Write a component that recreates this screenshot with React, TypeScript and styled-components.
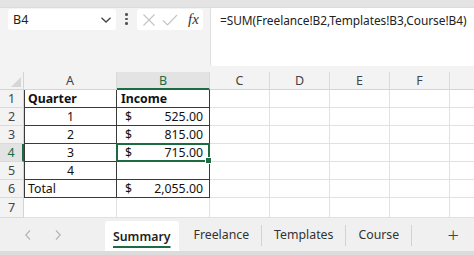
import React from 'react';
import styled, { createGlobalStyle } from 'styled-components';

const GlobalStyle = createGlobalStyle`
  html, body {
    margin: 0;
    padding: 0;
    background: #f3f3f3;
    font-family: "Noto Sans", "Open Sans", sans-serif;
    color: #1f1f1f;
  }
  #root {
    width: 474px;
    height: 255px;
    overflow: hidden;
  }
`;

// last column is only partly in view, so its letter is not shown
const COLS = ['A', 'B', 'C', 'D', 'E', 'F', ''];
const COL_WIDTHS = '24px 93px 93px 60px 60px 60px 60px 60px';

type Row = { a: string; b: string; bold?: boolean; money?: boolean; boxed?: boolean; alignA?: 'left' | 'center' };

const rows: Row[] = [
  { a: 'Quarter', b: 'Income', bold: true, boxed: true, alignA: 'left' },
  { a: '1', b: '525.00', money: true, boxed: true },
  { a: '2', b: '815.00', money: true, boxed: true },
  { a: '3', b: '715.00', money: true, boxed: true },
  { a: '4', b: '', boxed: true },
  { a: 'Total', b: '2,055.00', money: true, boxed: true, alignA: 'left' },
  { a: '', b: '' },
];

const SELECTED_ROW = 4;

const App = () => {
  return (
    <Page>
      <GlobalStyle />
      <TopStrip />
      <FormulaArea>
        <NameBox>
          <span>B4</span>
          <svg width="12" height="8" viewBox="0 0 12 8">
            <path d="M1.5 1.8 L6 6 L10.5 1.8" fill="none" stroke="#444" strokeWidth="1.3" />
          </svg>
        </NameBox>
        <Dots>
          <i />
          <i />
          <i />
        </Dots>
        <ActionBox>
          <svg width="14" height="14" viewBox="0 0 14 14">
            <path d="M1.5 1.5 L12.5 12.5 M12.5 1.5 L1.5 12.5" stroke="#c4c4c4" strokeWidth="1.1" />
          </svg>
          <svg width="16" height="14" viewBox="0 0 16 14">
            <path d="M1 7.5 L5.5 12 L15 2" fill="none" stroke="#c4c4c4" strokeWidth="1.1" />
          </svg>
          <Fx>fx</Fx>
        </ActionBox>
        <FormulaBox>=SUM(Freelance!B2,Templates!B3,Course!B4)</FormulaBox>
      </FormulaArea>

      <Sheet>
        <Corner>
          <svg width="10" height="10" viewBox="0 0 10 10">
            <path d="M10 0 L10 10 L0 10 Z" fill="#d6d6d6" />
          </svg>
        </Corner>
        {COLS.map((c, i) => (
          <ColHeader key={i} $active={c === 'B'}>
            {c}
          </ColHeader>
        ))}

        {rows.map((r, i) => {
          const n = i + 1;
          return (
            <React.Fragment key={n}>
              <RowHeader $active={n === SELECTED_ROW}>{n}</RowHeader>
              <Cell $boxed={r.boxed} $left $bold={r.bold} $align={r.alignA || 'center'}>
                {r.a}
              </Cell>
              <Cell $boxed={r.boxed} $bold={r.bold} $selected={n === SELECTED_ROW} $align="left">
                {r.money ? (
                  <Money>
                    <span>$</span>
                    <span>{r.b}</span>
                  </Money>
                ) : (
                  r.b
                )}
              </Cell>
              {COLS.slice(2).map((_, j) => (
                <Cell key={j} />
              ))}
            </React.Fragment>
          );
        })}
      </Sheet>

      <TabBar>
        <NavArrows>
          <svg width="8" height="12" viewBox="0 0 8 12">
            <path d="M6 1.5 L1.8 6 L6 10.5" fill="none" stroke="#b5b5b5" strokeWidth="1.2" />
          </svg>
          <svg width="8" height="12" viewBox="0 0 8 12">
            <path d="M2 1.5 L6.2 6 L2 10.5" fill="none" stroke="#b5b5b5" strokeWidth="1.2" />
          </svg>
        </NavArrows>
        <Tab $active>Summary</Tab>
        <Tab>Freelance</Tab>
        <Sep />
        <Tab>Templates</Tab>
        <Sep />
        <Tab>Course</Tab>
        <Sep />
        <AddTab>+</AddTab>
      </TabBar>
      <BottomStrip />
    </Page>
  );
};

const Page = styled.div`
  width: 474px;
  height: 255px;
  display: flex;
  flex-direction: column;
  background: #f3f3f3;
  overflow: hidden;
`;

const TopStrip = styled.div`
  height: 7px;
  flex-shrink: 0;
  background: #e4e4e4;
  border-bottom: 1px solid #dcdcdc;
`;

const FormulaArea = styled.div`
  height: 64px;
  flex-shrink: 0;
  display: flex;
  align-items: flex-start;
  padding-left: 8px;
  box-sizing: border-box;
`;

const NameBox = styled.div`
  margin-top: 1px;
  width: 108px;
  height: 21px;
  background: #fff;
  border-radius: 3px;
  display: flex;
  align-items: center;
  justify-content: space-between;
  padding: 0 4px 0 5px;
  box-sizing: border-box;
  font-size: 12.5px;
  color: #222;
`;

const Dots = styled.div`
  width: 21px;
  height: 22px;
  display: flex;
  flex-direction: column;
  align-items: center;
  justify-content: center;
  gap: 2px;
  i {
    width: 2.5px;
    height: 2.5px;
    border-radius: 50%;
    background: #555;
  }
`;

const ActionBox = styled.div`
  margin-top: 1px;
  width: 66px;
  height: 21px;
  background: #fff;
  border-radius: 3px;
  display: flex;
  align-items: center;
  padding: 0 4px 0 5px;
  gap: 6px;
  box-sizing: border-box;
`;

const Fx = styled.span`
  margin-left: 4px;
  font-family: "Liberation Serif", serif;
  font-style: italic;
  font-size: 15px;
  color: #333;
`;

const FormulaBox = styled.div`
  margin-left: 7px;
  flex: 1;
  height: 58px;
  background: #fff;
  border-left: 1px solid #dedede;
  border-radius: 2px 0 0 2px;
  padding: 4px 0 0 9px;
  box-sizing: border-box;
  font-size: 11.9px;
  letter-spacing: -0.05px;
  color: #222;
  white-space: nowrap;
  overflow: hidden;
`;

const Sheet = styled.div`
  display: grid;
  grid-template-columns: ${COL_WIDTHS};
  grid-template-rows: 18px repeat(6, 18px) 20px;
  flex-shrink: 0;
  width: 474px;
  overflow: hidden;
  background: #fff;
  font-size: 12.3px;
`;

const Corner = styled.div`
  background: #f3f3f3;
  display: flex;
  align-items: flex-end;
  justify-content: flex-end;
  padding: 0 2px 2px 0;
  border-bottom: 1px solid #d4d4d4;
  border-right: 1px solid #d4d4d4;
`;

const ColHeader = styled.div<{ $active?: boolean }>`
  display: flex;
  align-items: center;
  justify-content: center;
  background: ${(p) => (p.$active ? '#e3e3e3' : '#f3f3f3')};
  color: ${(p) => (p.$active ? '#1d6b43' : '#444')};
  border-right: 1px solid #dadada;
  border-bottom: ${(p) => (p.$active ? '2px solid #1d6b43' : '1px solid #d4d4d4')};
  font-size: 12.5px;
`;

const RowHeader = styled.div<{ $active?: boolean }>`
  display: flex;
  align-items: center;
  justify-content: center;
  background: ${(p) => (p.$active ? '#e3e3e3' : '#f3f3f3')};
  color: ${(p) => (p.$active ? '#1d6b43' : '#444')};
  border-right: ${(p) => (p.$active ? '2px solid #1d6b43' : '1px solid #d4d4d4')};
  border-bottom: 1px solid #dadada;
  font-size: 12.5px;
`;

const Cell = styled.div<{
  $boxed?: boolean;
  $left?: boolean;
  $bold?: boolean;
  $selected?: boolean;
  $align?: 'left' | 'center';
}>`
  position: relative;
  display: flex;
  align-items: center;
  justify-content: ${(p) => (p.$align === 'center' ? 'center' : 'flex-start')};
  padding: 0 3px 0 4px;
  box-sizing: border-box;
  font-weight: ${(p) => (p.$bold ? 700 : 400)};
  color: #111;
  white-space: nowrap;
  border-right: 1px solid ${(p) => (p.$boxed ? '#3a3a3a' : '#e1e1e1')};
  border-bottom: 1px solid ${(p) => (p.$boxed ? '#3a3a3a' : '#e1e1e1')};
  box-shadow: ${(p) => (p.$boxed && p.$left ? 'inset 1px 0 0 #3a3a3a' : 'none')};

  ${(p) =>
    p.$selected &&
    `
    &::after {
      content: '';
      position: absolute;
      left: -1px;
      top: -1px;
      right: -1px;
      bottom: -1px;
      border: 2px solid #1d6b43;
      pointer-events: none;
    }
    &::before {
      content: '';
      position: absolute;
      right: -3px;
      bottom: -3px;
      width: 5px;
      height: 5px;
      background: #1d6b43;
      border: 1px solid #fff;
      z-index: 2;
    }
  `}
`;

const Money = styled.div`
  flex: 1;
  display: flex;
  justify-content: space-between;
  padding-left: 4px;
  padding-right: 3px;
`;

const TabBar = styled.div`
  height: 33px;
  flex-shrink: 0;
  display: flex;
  align-items: stretch;
  background: #f0f0f0;
  font-size: 12.3px;
  color: #333;
`;

const NavArrows = styled.div`
  width: 105px;
  display: flex;
  align-items: center;
  padding-left: 24px;
  gap: 22px;
  box-sizing: border-box;
`;

const Tab = styled.div<{ $active?: boolean }>`
  display: flex;
  align-items: center;
  padding: 0 ${(p) => (p.$active ? '8px' : '12px')};
  margin-top: ${(p) => (p.$active ? '3px' : '0')};
  margin-right: ${(p) => (p.$active ? '3px' : '0')};
  background: ${(p) => (p.$active ? '#fff' : 'transparent')};
  border-radius: 3px 3px 0 0;
  font-weight: ${(p) => (p.$active ? 600 : 400)};
  color: ${(p) => (p.$active ? '#1f1f1f' : '#333')};
  ${(p) =>
    p.$active &&
    `
    text-decoration: underline;
    text-decoration-color: #1d6b43;
    text-decoration-thickness: 2px;
    text-underline-offset: 5px;
  `}
`;

const Sep = styled.div`
  width: 1px;
  margin: 7px 0 5px;
  background: #d2d2d2;
`;

const AddTab = styled.div`
  flex: 1;
  display: flex;
  align-items: center;
  justify-content: flex-end;
  padding-right: 15px;
  font-size: 20px;
  font-weight: 300;
  color: #444;
`;

const BottomStrip = styled.div`
  flex: 1;
  background: #dcdcdc;
`;

export default App;
